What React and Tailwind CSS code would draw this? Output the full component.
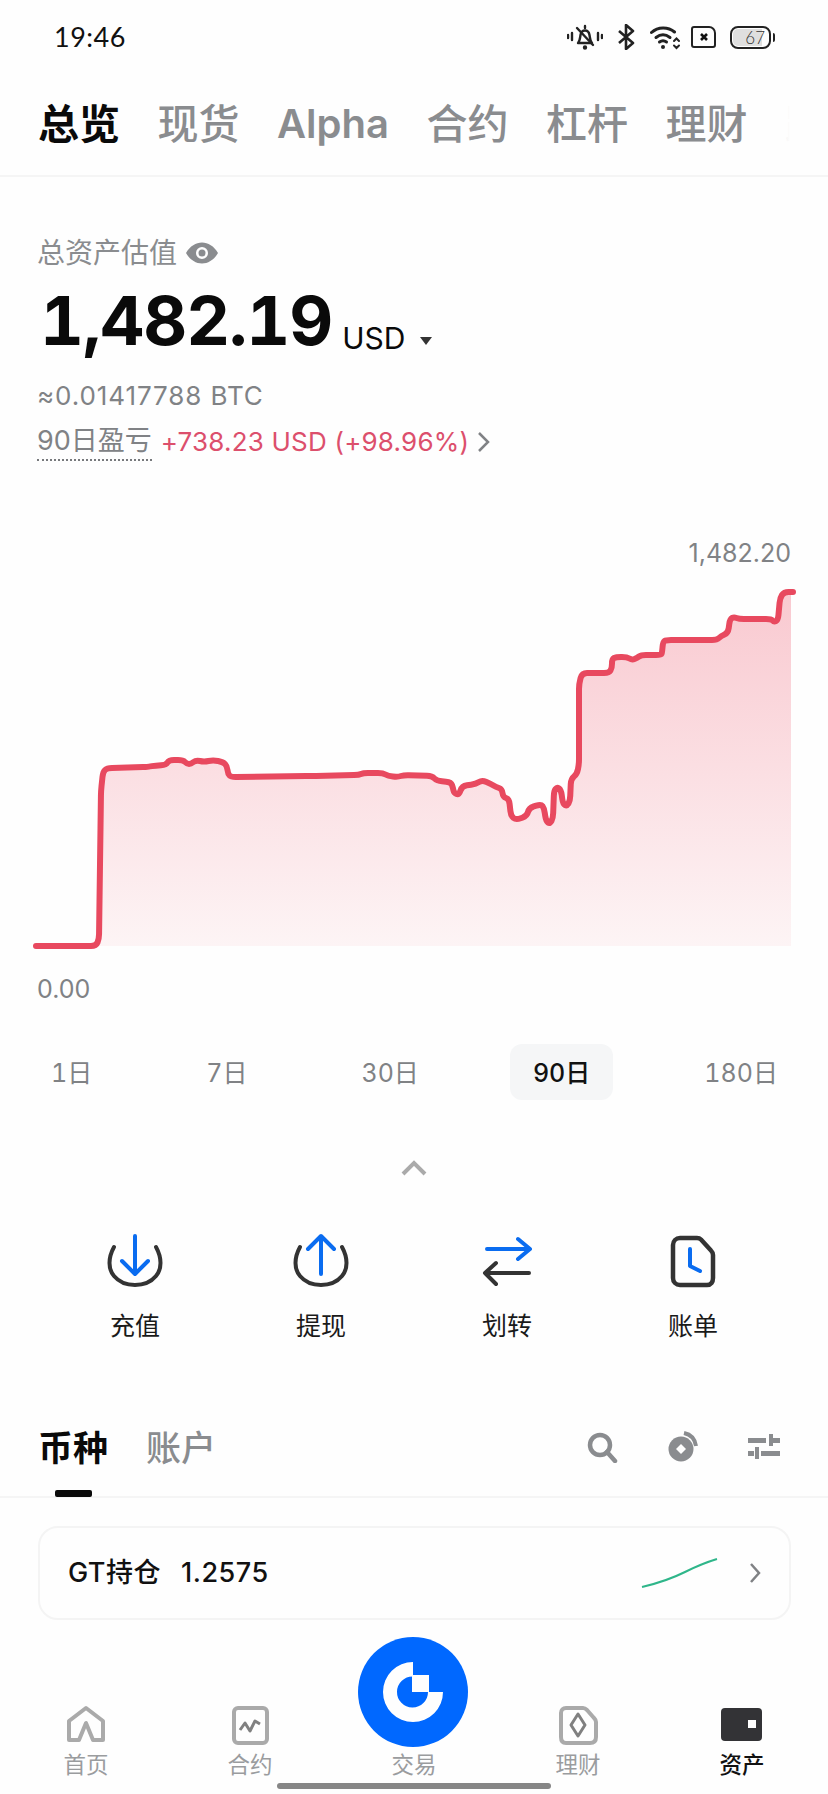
import React from "react";

const CJK = `font-['Inter','Noto_Sans_CJK_SC',sans-serif]`;

const linePoints =
  "35,945 95,945 98,938 100,790 102,771 106,767 147,766 150,765 165,764 168,759 182,759 186,763 190,763 195,759 203,761 212,759 222,761 226,765 227,773 230,776 310,775 358,774 362,772 382,772 387,775 397,776 403,774 431,775 436,780 450,781 452,787 453,792 458,794 461,785 475,783 481,779 490,783 495,786 501,788 502,796 508,798 510,815 515,819 526,815 528,807 540,803 543,807 545,820 549,823 552,817 553,790 556,786 560,789 562,803 566,805 569,800 570,778 576,773 578,763 578,683 581,672 608,672 611,667 611,658 615,656 626,656 631,659 636,657 640,654 660,654 661,652 662,641 665,639 716,639 720,635 727,632 729,618 733,616 738,618 770,618 773,621 777,619 779,597 783,591 792,591";

// round each corner with a small radius so long runs stay straight
const pts = linePoints.split(" ").map((p) => p.split(",").map(Number));
const towards = (a, b) => {
  const len = Math.hypot(b[0] - a[0], b[1] - a[1]);
  const r = Math.min(5, len / 2);
  return [a[0] + ((b[0] - a[0]) * r) / len, a[1] + ((b[1] - a[1]) * r) / len];
};
let lineD = `M${pts[0][0]} ${pts[0][1]}`;
for (let i = 1; i < pts.length - 1; i++) {
  const before = towards(pts[i], pts[i - 1]);
  const after = towards(pts[i], pts[i + 1]);
  lineD += ` L${before[0]} ${before[1]} Q${pts[i][0]} ${pts[i][1]} ${after[0]} ${after[1]}`;
}
lineD += ` L${pts[pts.length - 1][0]} ${pts[pts.length - 1][1]}`;
const areaD = `${lineD} L790 591 L790 945 L95 945 Z`;

const topTabs = ["现货", "Alpha", "合约", "杠杆", "理财", "跟单"];
const ranges = ["1日", "7日", "30日", "90日", "180日"];

function StatusIcons() {
  return (
    <div className="flex items-center">
      <svg width="36" height="26" viewBox="0 0 36 26" fill="none" stroke="#222" strokeWidth="2.4" strokeLinecap="round" strokeLinejoin="round">
        <path d="M1 11v3M5 9v7M31 9v7M35 11v3" />
        <path d="M11 19c2-2 2-5 2.500-8 .5-3 2-4.500 4.500-4.500s4 1.500 4.500 4.500c.5 3 .5 6 2.500 8z" />
        <path d="M18 2v2M10 4l16 17" />
        <circle cx="18" cy="23.500" r="1" fill="#222" />
      </svg>
      <svg className="ml-[14px]" width="18" height="26" viewBox="0 0 18 26" fill="none" stroke="#222" strokeWidth="2.6" strokeLinejoin="round">
        <path d="M2 7l14 12-7 6V1l7 6L2 19" />
      </svg>
      <svg className="ml-[15px]" width="31" height="26" viewBox="0 0 31 26" fill="none" stroke="#222" strokeWidth="3" strokeLinecap="round">
        <path d="M1.500 8.500C8 2.500 18 2.500 24.500 8" />
        <path d="M6 13.500c4.500-3.500 9.500-3.500 14 0" />
        <path d="M9.500 18c2-1.500 5-1.500 7 0" />
        <circle cx="13" cy="23" r="2" fill="#222" stroke="none" />
        <path d="M24 17l2.500-2.500 2.500 2.500M24 21.500l2.500 2.500 2.500-2.500" strokeWidth="2" />
      </svg>
      <div className="ml-[10px] flex h-[22px] w-[25px] items-center justify-center rounded-[3px] rounded-tr-[7px] border-2 border-[#222]">
        <svg width="10" height="10" viewBox="0 0 10 10" stroke="#111" strokeWidth="2.600">
          <path d="M2 2l6 6M8 2l-6 6" />
        </svg>
      </div>
      <div className="ml-[14px] flex items-center">
        <div className="h-[23px] w-[41px] overflow-hidden rounded-[8px] border-2 border-[#222] p-[1px]">
          <div className="flex h-full w-[29px] items-center justify-end rounded-l-[5px] bg-[#dfdfdf]">
            <span className="translate-x-[3px] font-['Lato',sans-serif] text-[17px] font-light leading-none text-[#333]">67</span>
          </div>
        </div>
        <div className="ml-[2px] h-[9px] w-[2px] rounded-r-sm bg-[#222]" />
      </div>
    </div>
  );
}

function EyeIcon() {
  return (
    <svg width="32" height="22" viewBox="0 0 32 22">
      <path fillRule="evenodd" fill="#8a8c8f" d="M0 11C4 4 10 .5 16 .5S28 4 32 11c-4 7-10 10.500-16 10.500S4 18 0 11zm16-6a6 6 0 100 12 6 6 0 000-12z" />
      <circle cx="16" cy="11" r="3.500" fill="#8a8c8f" />
    </svg>
  );
}

function Chart() {
  return (
    <svg className="mt-[13px] block" width="828" height="375" viewBox="-1 580 828 375">
      <defs>
        <linearGradient id="area" x1="0" y1="591" x2="0" y2="945" gradientUnits="userSpaceOnUse">
          <stop offset="0" stopColor="#f9c9d0" />
          <stop offset="1" stopColor="#fdf4f5" />
        </linearGradient>
      </defs>
      <path d={areaD} fill="url(#area)" />
      <path d={lineD} fill="none" stroke="#e8495f" strokeWidth="6" strokeLinecap="round" strokeLinejoin="round" />
    </svg>
  );
}

function Arc() {
  return <path d="M9 16C3 27 3 38 9 45C14 51 22 54 30 54C38 54 46 51 51 45C57 38 57 27 51 16" stroke="#333" strokeWidth="4" strokeLinecap="round" />;
}

const actions = [
  {
    label: "充值",
    icon: (
      <>
        <Arc />
        <path d="M30 5v37M17 30l13 13 13-13" stroke="#0a6cf0" strokeWidth="4" strokeLinecap="round" strokeLinejoin="round" />
      </>
    ),
  },
  {
    label: "提现",
    icon: (
      <>
        <Arc />
        <path d="M30 43V6M17 18L30 5l13 13" stroke="#0a6cf0" strokeWidth="4" strokeLinecap="round" strokeLinejoin="round" />
      </>
    ),
  },
  {
    label: "划转",
    icon: (
      <>
        <path d="M10 18h42M41 8l12 10-12 10" stroke="#0a6cf0" strokeWidth="4" strokeLinecap="round" strokeLinejoin="round" />
        <path d="M52 42H9M19 32L8 42l11 11" stroke="#333" strokeWidth="4" strokeLinecap="round" strokeLinejoin="round" />
      </>
    ),
  },
  {
    label: "账单",
    icon: (
      <>
        <path d="M17 7h17c2 0 3 .5 4 1.500l10 11c1.500 1.500 2 2.500 2 4.500v23c0 4-2 7-6 7H17c-4 0-7-3-7-7V14c0-4 3-7 7-7z" stroke="#333" strokeWidth="4.500" />
        <path d="M27 18v17l10 5" stroke="#0a6cf0" strokeWidth="4" strokeLinecap="round" strokeLinejoin="round" />
      </>
    ),
  },
];

function ListTools() {
  return (
    <div className="flex items-center">
      <svg width="32" height="32" viewBox="0 0 32 32" fill="none" stroke="#8a8c8f" strokeWidth="4.500">
        <circle cx="14" cy="14" r="10" />
        <path d="M21 21l8 9" strokeLinecap="round" />
      </svg>
      <svg className="ml-[49px]" width="32" height="32" viewBox="0 0 32 32" fill="none">
        <circle cx="14" cy="18" r="12.500" fill="#8a8c8f" />
        <path d="M14 13l5 5-5 5-5-5z" fill="#fefefe" />
        <path d="M17 2c7 1.500 11 6 12 13" stroke="#8a8c8f" strokeWidth="4" />
      </svg>
      <svg className="ml-[49px]" width="32" height="26" viewBox="0 0 32 26" fill="#8a8c8f">
        <rect x="0" y="4" width="18" height="5" />
        <rect x="21" y="0" width="4" height="12" />
        <rect x="25" y="4" width="7" height="5" />
        <rect x="0" y="17" width="6" height="5" />
        <rect x="7" y="13" width="4" height="12" />
        <rect x="13" y="17" width="19" height="5" />
      </svg>
    </div>
  );
}

const stroke = { fill: "none", stroke: "#aaaaaa", strokeWidth: 4, strokeLinejoin: "round" };

const navItems = [
  {
    label: "首页",
    icon: <path d="M5 37V18L22 5l17 13v19H29L22 20l-7 17z" {...stroke} />,
  },
  {
    label: "合约",
    icon: (
      <>
        <rect x="6" y="5" width="33" height="35" rx="4" {...stroke} />
        <path d="M12 27l5-7 5 8 5-10 5 3" fill="none" stroke="#808080" strokeWidth="3" strokeLinejoin="round" />
      </>
    ),
  },
  { label: "交易", icon: null },
  {
    label: "理财",
    icon: (
      <>
        <path d="M10 5h17c2 0 3 1 4 2l7 8c1 1 2 2 2 4v15c0 4-2 6-6 6H10c-3 0-5-2-5-6V10c0-3 2-5 5-5z" {...stroke} />
        <path d="M22 11l7 11-7 11-7-11z" fill="none" stroke="#808080" strokeWidth="3" strokeLinejoin="round" />
      </>
    ),
  },
  {
    label: "资产",
    active: true,
    icon: (
      <>
        <rect x="1" y="5" width="41" height="33" rx="4" fill="#333336" />
        <rect x="28" y="17" width="8" height="8" fill="#fefefe" />
      </>
    ),
  },
];

export default function App() {
  return (
    <div className={`flex h-[1794px] w-[828px] flex-col overflow-hidden bg-[#fefefe] ${CJK}`}>
      {/* status bar */}
      <div className="flex h-[74px] shrink-0 items-center justify-between pl-[54px] pr-[53px]">
        <span className="font-['Lato',sans-serif] text-[27px] tracking-[0.5px] text-[#111]">19:46</span>
        <StatusIcons />
      </div>

      {/* top tabs */}
      <div className="h-[103px] shrink-0 border-b-2 border-[#f5f5f5] pl-[38px] pt-[20px]">
        <div className="relative h-[60px] w-[752px] overflow-hidden">
          <div className="flex items-center gap-[37.500px] whitespace-nowrap text-[41px] font-medium leading-[60px] text-[#8a8c8f]">
            <span className="shrink-0 font-bold text-[#0a0a0a]">总览</span>
            {topTabs.map((tab) => (
              <span key={tab} className={tab === "Alpha" ? "shrink-0 text-[40px] font-semibold" : "shrink-0"}>
                {tab}
              </span>
            ))}
          </div>
          <div className="absolute right-0 top-0 h-full w-[10px] bg-gradient-to-r from-[#fefefe]/80 to-[#fefefe]" />
        </div>
      </div>

      {/* total assets */}
      <div className="shrink-0 pl-[37px] pt-[57px]">
        <div className="flex h-[38px] items-center gap-[9px] text-[28px] leading-[38px] text-[#8a8c8f]">
          <span>总资产估值</span>
          <EyeIcon />
        </div>
        <div className="mt-[8px] flex h-[80px] items-baseline pl-[3px] text-[#0a0a0a]">
          <span className="text-[68px] font-bold tabular-nums leading-[80px] tracking-[-1px]">1,482.19</span>
          <span className="ml-[10px] translate-y-[4px] text-[30px]">USD</span>
          <span className="mb-[2px] ml-[14px] h-0 w-0 border-x-[6px] border-t-[8px] border-x-transparent border-t-[#333]" />
        </div>
        <div className="mt-[18px] h-[36px] text-[26px] leading-[36px] tracking-[0.9px] text-[#808285]">≈0.01417788 BTC</div>
        <div className="mt-[8px] flex h-[40px] items-center text-[26px] leading-[36px]">
          <span className="border-b-2 border-dotted border-[#77797c] text-[27px] text-[#808285]">90日盈亏</span>
          <span className="ml-[9px] tracking-[0.2px] text-[#dc4f6c]">+738.23 USD (+98.96%)</span>
          <svg className="ml-[8px]" width="14" height="22" viewBox="0 0 14 22" fill="none" stroke="#808285" strokeWidth="2.500">
            <path d="M2 2l9 9-9 9" />
          </svg>
        </div>
      </div>

      {/* chart */}
      <div className="mt-[76px] shrink-0">
        <div className="pr-[37px] text-right text-[25px] leading-[30px] text-[#808285]">1,482.20</div>
        <Chart />
        <div className="mt-[18px] pl-[37px] text-[25px] leading-[30px] text-[#808285]">0.00</div>
      </div>

      {/* range picker */}
      <div className="mt-[40px] flex h-[56px] shrink-0 gap-[68px] pl-[28px]">
        {ranges.map((range) => (
          <div
            key={range}
            className={`flex items-center justify-center rounded-[12px] px-[23px] pt-[3px] text-[25px] tabular-nums ${
              range === "90日" ? "bg-[#f5f6f7] font-medium text-[#111]" : "text-[#808285]"
            }`}
          >
            {range}
          </div>
        ))}
      </div>

      <div className="mt-[60px] flex shrink-0 justify-center">
        <svg width="28" height="16" viewBox="0 0 28 16" fill="none" stroke="#aaaaaa" strokeWidth="4">
          <path d="M3 14L14 3l11 11" />
        </svg>
      </div>

      {/* quick actions */}
      <div className="mt-[55px] grid shrink-0 grid-cols-4 px-[42px]">
        {actions.map((action) => (
          <div key={action.label} className="flex flex-col items-center">
            <svg width="60" height="60" viewBox="0 0 60 60" fill="none">
              {action.icon}
            </svg>
            <span className="mt-[18px] text-[25px] leading-[34px] text-[#1a1a1a]">{action.label}</span>
          </div>
        ))}
      </div>

      {/* list header */}
      <div className="relative mt-[80px] flex h-[75px] shrink-0 items-start justify-between border-b-2 border-[#f5f5f5] pl-[38px] pr-[48px]">
        <div className="flex gap-[38px] text-[35px] font-medium leading-[50px]">
          <span className="font-bold text-[#0a0a0a]">币种</span>
          <span className="text-[#8a8c8f]">账户</span>
        </div>
        <div className="mt-[8px]">
          <ListTools />
        </div>
        <div className="absolute bottom-[-1px] left-[55px] h-[7px] w-[37px] rounded-[2px] bg-[#0a0a0a]" />
      </div>

      {/* GT card */}
      <div className="ml-[38px] mr-[37px] mt-[28px] flex h-[94px] shrink-0 items-center justify-between rounded-[20px] border-2 border-[#f4f4f4] pl-[28px] pr-[28px]">
        <div className="flex items-center gap-[20px] text-[27px] font-medium tracking-[0.5px] text-[#111]">
          <span>GT持仓</span>
          <span>1.2575</span>
        </div>
        <div className="flex items-center gap-[30px]">
          <svg width="78" height="30" viewBox="0 0 78 30" fill="none" stroke="#2fb68a" strokeWidth="2">
            <path d="M1 29C18 25 32 20 44 14C56 8 66 4 76 1" />
          </svg>
          <svg width="12" height="22" viewBox="0 0 12 22" fill="none" stroke="#808285" strokeWidth="2.500">
            <path d="M2 2l8 9-8 9" />
          </svg>
        </div>
      </div>

      {/* bottom nav */}
      <div className="relative mt-auto shrink-0">
        <div className="grid grid-cols-5 px-[4px]">
          {navItems.map((item) => (
            <div key={item.label} className="flex flex-col items-center">
              <svg width="44" height="44" viewBox="0 0 44 44">
                {item.icon}
              </svg>
              <span className={`mt-[5px] text-[22.500px] leading-[26px] ${item.active ? "font-medium text-[#111]" : "text-[#9a9c9e]"}`}>
                {item.label}
              </span>
            </div>
          ))}
        </div>
        <div className="mx-auto mb-[5px] mt-[5px] h-[6px] w-[274px] rounded-full bg-[#868686]" />
        {/* trade button */}
        <div className="absolute left-[358px] top-[-66px] flex h-[110px] w-[110px] items-center justify-center rounded-full bg-[#0068ff]">
          <svg width="64" height="64" viewBox="0 0 64 64" fill="#fefefe">
            <path fillRule="evenodd" d="M32 2A30 30 0 1062 32H47A15.500 15.500 0 1132 16.500z" />
            <rect x="31" y="15" width="17" height="17" />
          </svg>
        </div>
      </div>
    </div>
  );
}
